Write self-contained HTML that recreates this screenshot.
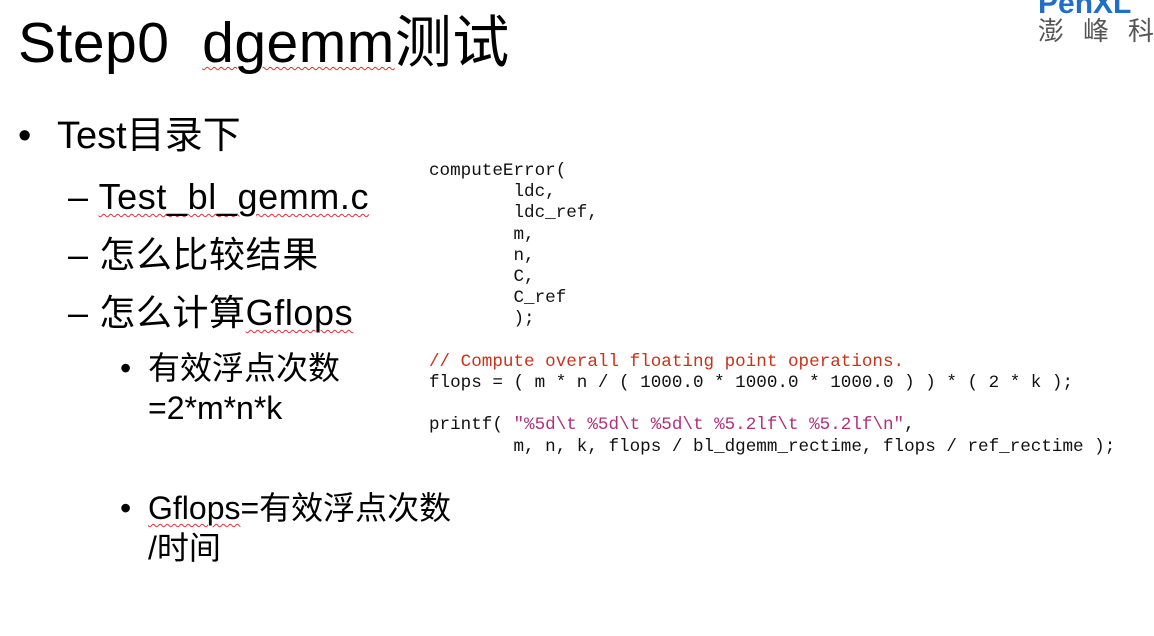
<!DOCTYPE html>
<html><head><meta charset="utf-8"><style>
body{margin:0;width:1154px;height:636px;background:#fff;position:relative;overflow:hidden;font-family:"Liberation Sans","Noto Sans CJK SC",sans-serif;color:#000}
.a{position:absolute;white-space:nowrap}
.sq{text-decoration:underline wavy #e03030;text-decoration-thickness:1px;text-underline-offset:4px}
pre{position:absolute;left:429px;top:161px;margin:0;font-family:"Liberation Mono",monospace;font-size:17.6px;line-height:21.2px;color:#111}
.r{color:#c8321e}.p{color:#b0307e}
</style></head><body>
<div class="a" style="left:18px;top:7px;font-size:57px;line-height:72px;letter-spacing:0.5px">Step0&nbsp; <span class="sq">dgemm</span>测试</div>
<div class="a" style="left:1038px;top:-11px;font-size:30px;font-weight:bold;color:#1f6fc8;line-height:30px">PenXL</div>
<div class="a" style="left:1038px;top:16px;font-size:26px;color:#555;letter-spacing:19px;line-height:30px">澎峰科</div>
<div class="a" style="left:18px;top:112px;font-size:38px;line-height:48px"><span style="display:inline-block;width:39px">•</span>Test目录下</div>
<div class="a" style="left:68px;top:175px;font-size:36px;line-height:44px;letter-spacing:0.6px">– <span class="sq">Test_bl_gemm.c</span></div>
<div class="a" style="left:68px;top:233px;font-size:36px;line-height:44px;letter-spacing:0.6px">– 怎么比较结果</div>
<div class="a" style="left:68px;top:291px;font-size:36px;line-height:44px;letter-spacing:0.6px">– 怎么计算<span class="sq">Gflops</span></div>
<div class="a" style="left:120px;top:348px;font-size:32px;line-height:40px"><span style="display:inline-block;width:28px">•</span>有效浮点次数</div>
<div class="a" style="left:148px;top:388px;font-size:32px;line-height:40px">=2*m*n*k</div>
<div class="a" style="left:120px;top:488px;font-size:32px;line-height:40px"><span style="display:inline-block;width:28px">•</span><span class="sq">Gflops</span>=有效浮点次数</div>
<div class="a" style="left:148px;top:528px;font-size:32px;line-height:40px">/时间</div>
<pre>computeError(
        ldc,
        ldc_ref,
        m,
        n,
        C,
        C_ref
        );

<span class="r">// Compute overall floating point operations.</span>
flops = ( m * n / ( 1000.0 * 1000.0 * 1000.0 ) ) * ( 2 * k );

printf( <span class="p">"%5d\t %5d\t %5d\t %5.2lf\t %5.2lf\n"</span>,
        m, n, k, flops / bl_dgemm_rectime, flops / ref_rectime );</pre>
</body></html>
